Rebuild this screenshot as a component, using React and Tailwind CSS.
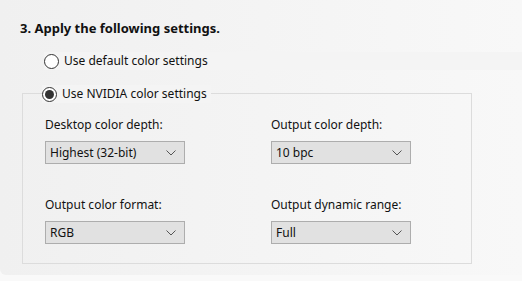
import React from 'react'

function Radio({ checked, label }) {
  return (
    <label className="flex items-center gap-[5px] bg-[#f4f4f4] pr-1">
      <span className="flex h-[15px] w-[15px] items-center justify-center rounded-full border border-[#333] bg-white">
        {checked && <span className="h-[9px] w-[9px] rounded-full bg-[#333]" />}
      </span>
      <span>{label}</span>
    </label>
  )
}

function Select({ value }) {
  return (
    <div className="flex h-[23px] w-[140px] items-center justify-between border border-[#adadad] bg-[#e1e1e1] pl-[4px] pr-[8px]">
      <span>{value}</span>
      <svg width="10" height="6" viewBox="0 0 10 6" fill="none">
        <path d="M0.5 0.5 L5 5 L9.5 0.5" stroke="#555" strokeWidth="1" />
      </svg>
    </div>
  )
}

function Field({ label, value }) {
  return (
    <div className="flex flex-col">
      <div className="h-[16px] leading-[16px]">{label}</div>
      <div className="mt-[8px]">
        <Select value={value} />
      </div>
    </div>
  )
}

const App = () => {
  return (
    <div className="h-[281px] w-[522px] bg-[#f9f9f9] text-[12px] text-[#111]" style={{ fontFamily: '"Segoe UI", "Noto Sans", sans-serif' }}>
      <div className="h-[275px] rounded-bl-[6px] bg-gradient-to-r from-[#f0f0f0] to-[#f8f8f8] pl-[20px] pt-[19px]">
        <h2 className="text-[13px] font-bold leading-[18px]">3. Apply the following settings.</h2>

        <div className="mt-[15px] pl-[24px]">
          <Radio label="Use default color settings" />
        </div>

        <div className="relative mt-[23px] ml-[2px] h-[171px] w-[450px] border border-[#dcdcdc]">
          <div className="absolute -top-[9px] left-[19px]">
            <Radio checked label="Use NVIDIA color settings" />
          </div>
          <div className="grid grid-cols-[226px_1fr] gap-y-[33px] pl-[22px] pt-[23px]">
            <Field label="Desktop color depth:" value="Highest (32-bit)" />
            <Field label="Output color depth:" value="10 bpc" />
            <Field label="Output color format:" value="RGB" />
            <Field label="Output dynamic range:" value="Full" />
          </div>
        </div>
      </div>
    </div>
  )
}

export default App
